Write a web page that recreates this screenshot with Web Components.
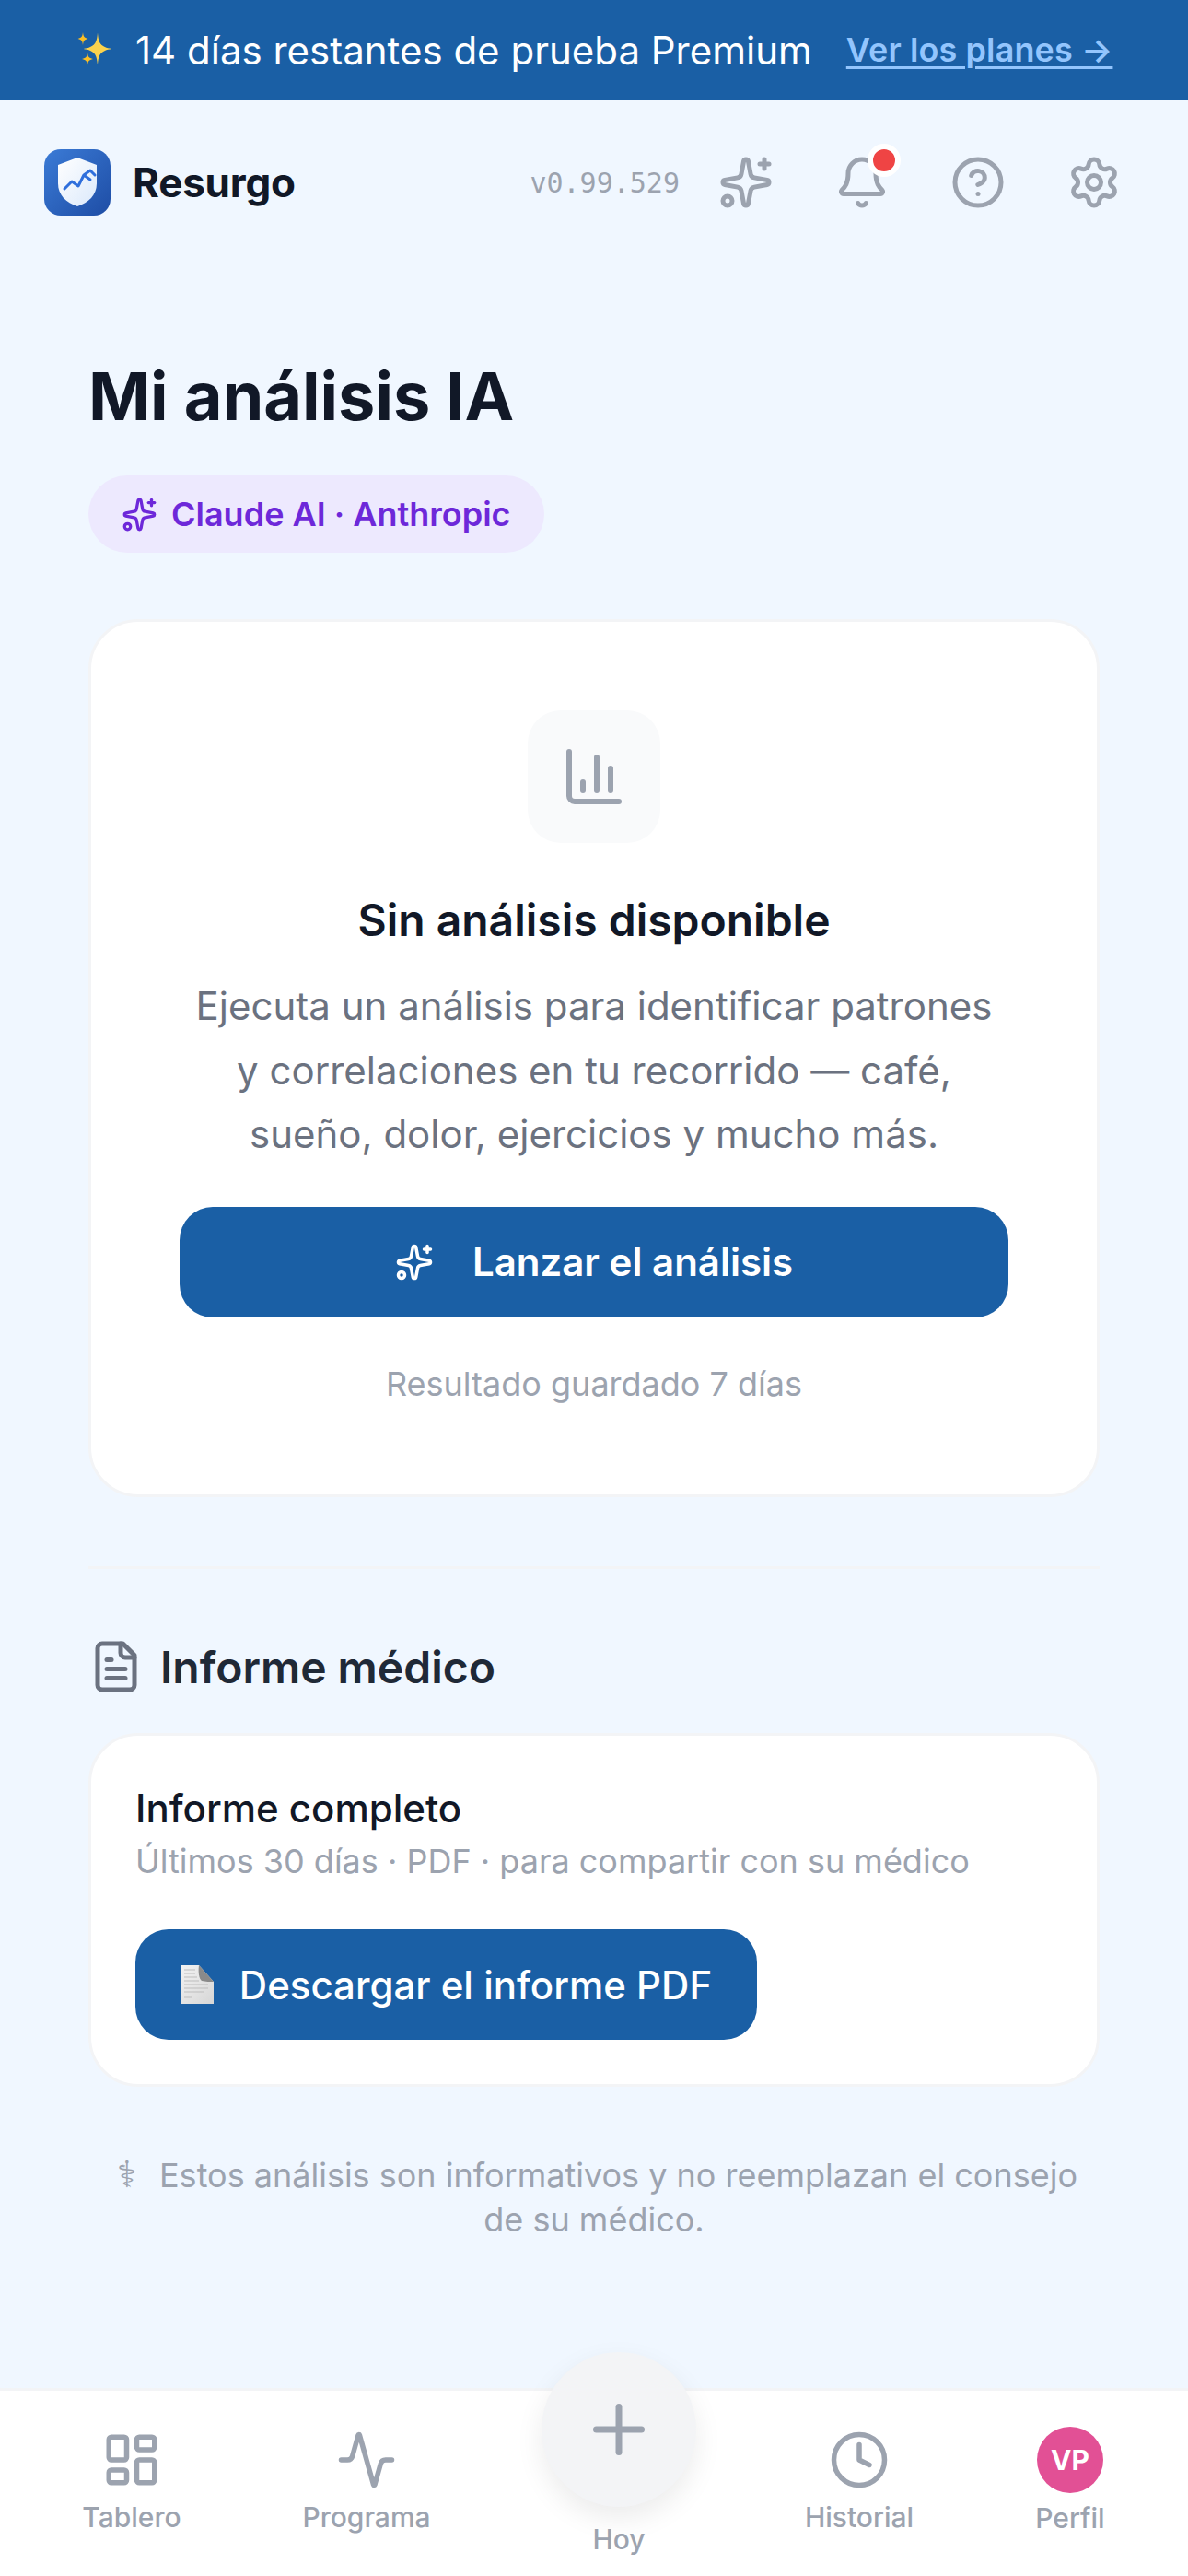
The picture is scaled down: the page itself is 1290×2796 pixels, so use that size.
<!DOCTYPE html>
<html lang="es"><head><meta charset="utf-8"><title>Resurgo</title>
<style>
html,body{margin:0;padding:0}
body{width:1290px;height:2796px;overflow:hidden;display:flex;flex-direction:column;background:#f0f7ff;font-family:Inter,"Noto Sans",sans-serif;color:#111827}
</style></head><body>
<x-banner></x-banner>
<x-header></x-header>
<x-main></x-main>
<x-nav></x-nav>
<script>
const ICONS={
sparkles:'<path d="M11.017 2.814a1 1 0 0 1 1.966 0l1.051 5.558a2 2 0 0 0 1.594 1.594l5.558 1.051a1 1 0 0 1 0 1.966l-5.558 1.051a2 2 0 0 0-1.594 1.594l-1.051 5.558a1 1 0 0 1-1.966 0l-1.051-5.558a2 2 0 0 0-1.594-1.594l-5.558-1.051a1 1 0 0 1 0-1.966l5.558-1.051a2 2 0 0 0 1.594-1.594z"/><path d="M20 2v4"/><path d="M22 4h-4"/><circle cx="4" cy="20" r="2"/>',
bell:'<path d="M10.268 21a2 2 0 0 0 3.464 0"/><path d="M3.262 15.326A1 1 0 0 0 4 17h16a1 1 0 0 0 .74-1.673C19.41 13.956 18 12.499 18 8A6 6 0 0 0 6 8c0 4.499-1.411 5.956-2.738 7.326"/>',
help:'<circle cx="12" cy="12" r="10"/><path d="M9.09 9a3 3 0 0 1 5.83 1c0 2-3 3-3 3"/><path d="M12 17h.01"/>',
gear:'<path d="M9.671 4.136a2.34 2.34 0 0 1 4.659 0 2.34 2.34 0 0 0 3.319 1.915 2.34 2.34 0 0 1 2.33 4.033 2.34 2.34 0 0 0 0 3.831 2.34 2.34 0 0 1-2.33 4.033 2.34 2.34 0 0 0-3.319 1.915 2.34 2.34 0 0 1-4.659 0 2.34 2.34 0 0 0-3.32-1.915 2.34 2.34 0 0 1-2.33-4.033 2.34 2.34 0 0 0 0-3.831A2.34 2.34 0 0 1 6.35 6.051a2.34 2.34 0 0 0 3.319-1.915"/><circle cx="12" cy="12" r="3"/>',
chart:'<path d="M3 3v16a2 2 0 0 0 2 2h16"/><path d="M18 17V9"/><path d="M13 17V5"/><path d="M8 17v-3"/>',
file:'<path d="M15 2H6a2 2 0 0 0-2 2v16a2 2 0 0 0 2 2h12a2 2 0 0 0 2-2V7Z"/><path d="M14 2v4a2 2 0 0 0 2 2h4"/><path d="M10 9H8"/><path d="M16 13H8"/><path d="M16 17H8"/>',
dash:'<rect width="7" height="9" x="3" y="3" rx="1"/><rect width="7" height="5" x="14" y="3" rx="1"/><rect width="7" height="9" x="14" y="12" rx="1"/><rect width="7" height="5" x="3" y="16" rx="1"/>',
activity:'<path d="M22 12h-2.48a2 2 0 0 0-1.93 1.46l-2.35 8.36a.25.25 0 0 1-.48 0L9.24 2.18a.25.25 0 0 0-.48 0l-2.35 8.36A2 2 0 0 1 4.49 12H2" transform="matrix(-1 0 0 -1 24 24)"/>',
clock:'<circle cx="12" cy="12" r="10"/><path d="M12 6v6l4 2"/>',
plus:'<path d="M5 12h14"/><path d="M12 5v14"/>'
};
class XIcon extends HTMLElement{
  connectedCallback(){
    const s=this.getAttribute('size')||66,c=this.getAttribute('color')||'#9ca3af',w=this.getAttribute('stroke')||2;
    this.attachShadow({mode:'open'}).innerHTML=`<style>:host{display:block;width:${s}px;height:${s}px;flex:none}svg{display:block}</style>
    <svg width="${s}" height="${s}" viewBox="0 0 24 24" fill="none" stroke="${c}" stroke-width="${w}" stroke-linecap="round" stroke-linejoin="round">${ICONS[this.getAttribute('name')]}</svg>`;
  }
}
customElements.define('x-icon',XIcon);

class XBanner extends HTMLElement{
  connectedCallback(){
    this.attachShadow({mode:'open'}).innerHTML=`<style>
    :host{display:flex;align-items:center;height:108px;background:#1a5fa5;color:#fff;padding-left:84px;box-sizing:border-box;flex:none}
    svg{display:block;flex:none;margin-right:21px;margin-top:-2px}
    .t{font-size:42px;white-space:nowrap}
    a{margin-left:37px;font-size:36px;font-weight:600;letter-spacing:.1px;color:#93c5fd;text-decoration:underline;text-underline-offset:5px;text-decoration-thickness:3px;white-space:nowrap}
    </style>
    <svg width="42" height="42" viewBox="0 0 42 42"><path fill="#fcd34d" d="M22 3.500c1 11.500 3 15.500 15.500 17.500C25 23 23 27 22 38.500 21 27 19 23 6.500 21 19 19 21 15 22 3.500z"/><path fill="#fbbf24" d="M6 3c.5 4.500 1.200 6 5.500 7C7.200 11 6.500 12.500 6 17c-.5-4.500-1.200-6-5.500-7C4.800 9 5.500 7.500 6 3z"/><path fill="#fbbf24" d="M11 25c.5 4.500 1.300 6 6 7-4.700 1-5.500 2.500-6 7-.5-4.500-1.300-6-6-7 4.700-1 5.500-2.500 6-7z"/></svg>
    <span class="t">14 días restantes de prueba Premium</span><a>Ver los planes →</a>`;
  }
}
customElements.define('x-banner',XBanner);

class XLogo extends HTMLElement{
  connectedCallback(){
    this.attachShadow({mode:'open'}).innerHTML=`<style>:host{display:block;width:72px;height:72px;flex:none}svg{display:block}</style>
    <svg width="72" height="72" viewBox="0 0 72 72"><defs>
    <linearGradient id="a" x1="0" y1="0" x2="1" y2="1"><stop offset="0" stop-color="#3b7bd6"/><stop offset="1" stop-color="#1e4da5"/></linearGradient>
    <linearGradient id="b" x1="0" y1="0" x2="1" y2="1"><stop offset="0" stop-color="#fff"/><stop offset="1" stop-color="#dbe9fb"/></linearGradient></defs>
    <rect width="72" height="72" rx="18" fill="url(#a)"/>
    <path d="M36 9l21 8v20c0 13-9 21-21 25C24 58 15 50 15 37V17z" fill="url(#b)"/>
    <path d="M22 43l8-8 7 5 6-12 7 5M43 28l7-5 5 5" fill="none" stroke="#2f6fdc" stroke-width="3" stroke-linecap="round" stroke-linejoin="round"/></svg>`;
  }
}
customElements.define('x-logo',XLogo);

class XHeader extends HTMLElement{
  connectedCallback(){
    this.attachShadow({mode:'open'}).innerHTML=`<style>
    :host{display:flex;align-items:center;height:180px;box-sizing:border-box;padding:0 72px 0 48px;flex:none}
    .n{font-size:44px;font-weight:700;margin-left:24px;color:#111827;letter-spacing:-.2px}
    .v{margin-left:auto;margin-right:42px;font:30px "DejaVu Sans Mono",monospace;color:#9ca3af}
    .i{display:flex;gap:66px}
    .b{position:relative}
    .d{position:absolute;left:36px;top:-12px;width:24px;height:24px;border-radius:50%;background:#ef4444;border:6px solid #fff}
    </style><x-logo></x-logo><span class="n">Resurgo</span><span class="v">v0.99.529</span>
    <div class="i"><x-icon name="sparkles" size="60"></x-icon><div class="b"><x-icon name="bell" size="60"></x-icon><span class="d"></span></div><x-icon name="help" size="60"></x-icon><x-icon name="gear" size="60"></x-icon></div>`;
  }
}
customElements.define('x-header',XHeader);

class XCard extends HTMLElement{
  connectedCallback(){
    this.attachShadow({mode:'open'}).innerHTML=`<style>:host{display:block;background:#fff;border:3px solid #f3f4f6;border-radius:54px;box-sizing:border-box;margin:0 96px}</style><slot></slot>`;
  }
}
customElements.define('x-card',XCard);

class XButton extends HTMLElement{
  connectedCallback(){
    this.attachShadow({mode:'open'}).innerHTML=`<style>:host{display:flex;align-items:center;justify-content:center;height:120px;background:#1a5fa5;border-radius:36px;color:#fff;font-size:42px;box-sizing:border-box}</style><slot></slot>`;
  }
}
customElements.define('x-button',XButton);

class XMain extends HTMLElement{
  connectedCallback(){
    this.attachShadow({mode:'open'}).innerHTML=`<style>
    :host{display:block;flex:1;min-height:0}
    h1{margin:0 0 0 96px;padding-top:100px;font-size:72px;line-height:84px;font-weight:700;color:#111827}
    .pill{display:inline-flex;align-items:center;height:84px;margin:44px 0 72px 96px;padding:0 36px;border-radius:42px;background:#ede9fe;color:#6d28d9;font-size:36px;font-weight:600;gap:15px;vertical-align:top}
    .wrap{display:block;height:200px}
    .c1{text-align:center;height:953px}
    .box{width:144px;height:144px;border-radius:36px;background:#f9fafb;display:flex;align-items:center;justify-content:center;margin:96px auto 0}
    h2{margin:54px 0 0;font-size:48px;line-height:60px;font-weight:600;color:#111827}
    p{margin:28px 0 0;font-size:42px;line-height:69.6px;color:#6b7280}
    x-button.go{width:900px;margin:44px auto 0;font-weight:600;gap:42px}
    .note{font-size:36px;line-height:48px;color:#9ca3af;margin-top:48px}
    hr{border:0;height:3px;background:#f3f4f6;margin:75px 96px 0}
    .sec{display:flex;align-items:center;gap:18px;margin:70px 0 36px 96px;height:72px;font-size:48px;font-weight:600;color:#1f2937}
    .c2{height:384px;padding:52px 48px 0 45px}
    .c2 b{display:block;font-size:42px;line-height:54px;font-weight:500;color:#111827;margin-left:3px}
    .c2 span.s{display:block;font-size:36px;line-height:48px;color:#9ca3af;margin:6px 0 0 3px}
    x-button.dl{width:675px;margin:50px 0 0 3px;font-weight:500;gap:28px}
    .page{display:block}
    .foot{margin:72px 96px 0;text-align:center;font-size:36px;line-height:48px;color:#9ca3af}
    .foot i{display:inline-block;width:53px;line-height:1;vertical-align:baseline;text-align:left;padding-left:7px;box-sizing:border-box;font-style:normal;font-size:40px;font-family:"DejaVu Sans",sans-serif}
    </style>
    <h1>Mi análisis IA</h1>
    <div class="wrap"><span class="pill"><x-icon name="sparkles" size="39" color="#6d28d9"></x-icon>Claude AI · Anthropic</span></div>
    <x-card class="c1">
      <div class="box"><x-icon name="chart" size="72"></x-icon></div>
      <h2>Sin análisis disponible</h2>
      <p>Ejecuta un análisis para identificar patrones<br>y correlaciones en tu recorrido — café,<br>sueño, dolor, ejercicios y mucho más.</p>
      <x-button class="go"><x-icon name="sparkles" size="42" color="#fff"></x-icon>Lanzar el análisis</x-button>
      <div class="note">Resultado guardado 7 días</div>
    </x-card>
    <hr>
    <div class="sec"><x-icon name="file" size="60" color="#6b7280"></x-icon><span>Informe médico</span></div>
    <x-card class="c2">
      <b>Informe completo</b><span class="s">Últimos 30 días · PDF · para compartir con su médico</span>
      <x-button class="dl"><svg class="page" width="36" height="42" viewBox="0 0 36 42"><defs><linearGradient id="p" x1="0" y1="0" x2="1" y2="1"><stop offset="0" stop-color="#f3f3f3"/><stop offset="1" stop-color="#d6d6d6"/></linearGradient></defs><path d="M0 0h20l16 18v24H0z" fill="url(#p)"/><path d="M20 0c-1 7 0 15 3 17 4 1 9 1 13 1z" fill="#8a8a8a"/><path d="M4 5h12M4 9h12M4 13h14M4 17h16M4 21h26M4 25h26M4 29h22M4 35h8" stroke="#bdbdbd" stroke-width="1"/></svg>Descargar el informe PDF</x-button>
    </x-card>
    <div class="foot"><i>⚕</i>Estos análisis son informativos y no reemplazan el consejo de su médico.</div>`;
  }
}
customElements.define('x-main',XMain);

class XNavItem extends HTMLElement{
  connectedCallback(){
    const l=this.getAttribute('label');
    this.attachShadow({mode:'open'}).innerHTML=`<style>
    :host{display:flex;flex-direction:column;align-items:center;font-size:30px;font-weight:500;color:#9ca3af;padding-top:var(--top,42px);padding-left:var(--left,0);gap:var(--gap,8px)}
    span{line-height:42px;white-space:nowrap}
    </style><slot></slot><span>${l}</span>`;
  }
}
customElements.define('x-nav-item',XNavItem);

class XNav extends HTMLElement{
  connectedCallback(){
    this.attachShadow({mode:'open'}).innerHTML=`<style>
    :host{display:grid;grid-template-columns:286px 224px 324px 198px 258px;height:204px;flex:none;background:#fff;border-top:3px solid #f3f4f6;box-sizing:border-box}
    .fab{width:168px;height:168px;border-radius:50%;background:#f3f4f6;box-shadow:0 12px 30px rgba(0,0,0,.08);display:flex;align-items:center;justify-content:center}
    .av{width:72px;height:72px;border-radius:50%;background:#e25095;color:#fff;font-size:30px;font-weight:700;display:flex;align-items:center;justify-content:center}
    </style>
    <x-nav-item label="Tablero"><x-icon name="dash"></x-icon></x-nav-item>
    <x-nav-item label="Programa"><x-icon name="activity"></x-icon></x-nav-item>
    <x-nav-item label="Hoy" style="--top:0;--gap:14px;margin-top:-42px"><div class="fab"><x-icon name="plus" size="84"></x-icon></div></x-nav-item>
    <x-nav-item label="Historial"><x-icon name="clock"></x-icon></x-nav-item>
    <x-nav-item label="Perfil" style="--top:39px;--gap:6px;--left:2px"><div class="av">VP</div></x-nav-item>`;
  }
}
customElements.define('x-nav',XNav);
</script>
</body></html>
